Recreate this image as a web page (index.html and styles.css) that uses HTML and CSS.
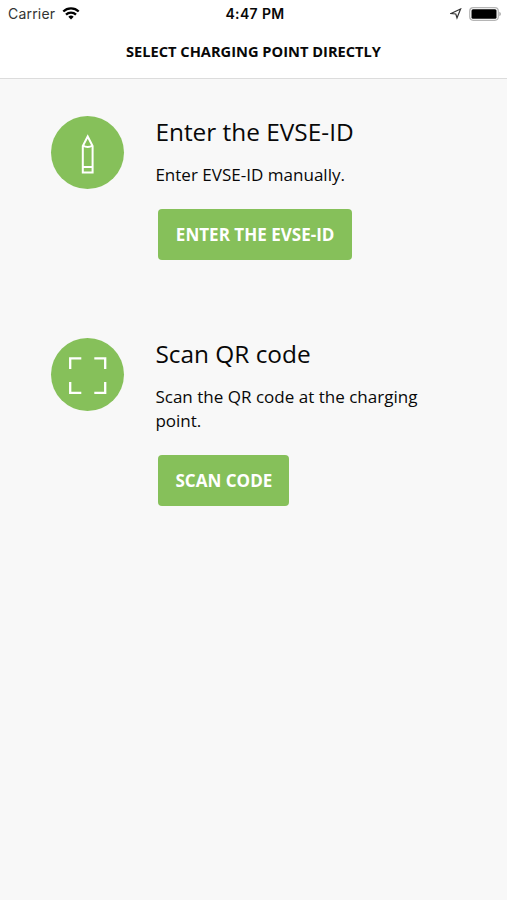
FILE: index.html
```html
<!DOCTYPE html>
<html lang="en">
<head>
  <meta charset="UTF-8" />
  <meta name="viewport" content="width=device-width, initial-scale=1" />
  <title>Select charging point directly</title>
  <link rel="stylesheet" href="styles.css">
</head>
<body>
  <header class="header">
    <div class="status-bar">
      <div class="status-left">
        <span class="carrier">Carrier</span>
        <svg class="wifi" width="18" height="14" viewBox="0 0 18 14">
          <g fill="none" stroke="#000" stroke-width="2.3">
            <path d="M1.3 4.5a11 11 0 0 1 15.4 0" />
            <path d="M4 7.6a7.1 7.1 0 0 1 10 0" />
          </g>
          <path d="M9 12.500L6.300 9.800a3.800 3.800 0 0 1 5.400 0z" />
        </svg>
      </div>
      <span class="time">4:47 PM</span>
      <div class="status-right">
        <svg class="location" width="12" height="12" viewBox="0 0 12 12">
          <path d="M1 5.500L10.600 1L7 10L5.800 6z" fill="none" stroke="#333" stroke-width="1.2" />
        </svg>
        <svg class="battery" width="33" height="14" viewBox="0 0 33 14">
          <rect x="0.7" y="0.7" width="28.6" height="12.6" rx="3.5" fill="none" stroke="#b5b5b5" stroke-width="1.2" />
          <rect x="2.5" y="2.3" width="25" height="9.4" rx="1.5" />
          <path d="M30.5 4.8a2.6 2.6 0 0 1 0 4.4z" fill="#888" />
        </svg>
      </div>
    </div>
    <h1 class="title">SELECT CHARGING POINT DIRECTLY</h1>
  </header>

  <main class="options">
    <section class="option">
      <div class="icon">
        <svg width="73" height="73" viewBox="0 0 73 73">
          <path d="M31.8 56.5V30L36.7 20.500L41.600 30V56.500zM31.800 51H41.600M31.800 29.500Q36.700 32.300 41.600 29.500" fill="none" stroke="#fff" stroke-width="2" />
        </svg>
      </div>
      <div class="details">
        <h2>Enter the EVSE-ID</h2>
        <p>Enter EVSE-ID manually.</p>
        <button class="evse">ENTER THE EVSE-ID</button>
      </div>
    </section>

    <section class="option">
      <div class="icon">
        <svg width="73" height="73" viewBox="0 0 73 73">
          <path d="M19.2 31V20.300H30.300M43.300 20.300H54.200V31M54.200 44V54.900H43.300M30.300 54.900H19.200V44" fill="none" stroke="#fff" stroke-width="2.3" />
        </svg>
      </div>
      <div class="details">
        <h2>Scan QR code</h2>
        <p>Scan the QR code at the charging point.</p>
        <button class="scan">SCAN CODE</button>
      </div>
    </section>
  </main>
</body>
</html>
```

FILE: styles.css
```css
* {
  box-sizing: border-box;
}

body {
  margin: 0;
  min-height: 100vh;
  background: #f8f8f8;
  color: #080808;
  font-family: "Open Sans", sans-serif;
}

.header {
  height: 79px;
  background: #fff;
  border-bottom: 1px solid #dcdcdc;
}

.status-bar {
  display: grid;
  grid-template-columns: 1fr auto 1fr;
  align-items: center;
  height: 27px;
  padding: 0 5px 0 8px;
  font-family: Inter, sans-serif;
  font-size: 14px;
}

.status-left,
.status-right {
  display: flex;
  align-items: center;
  gap: 7px;
}

.carrier {
  color: #333;
  letter-spacing: 0.2px;
}

.status-right {
  justify-content: flex-end;
}

.time {
  font-weight: 600;
  letter-spacing: 0.35px;
}

.title {
  margin: 0;
  font-size: 14.65px;
  line-height: 48px;
  font-weight: 700;
  text-align: center;
}

.options {
  display: flex;
  flex-direction: column;
  gap: 78px;
  padding: 36.5px 51px;
}

.option {
  display: flex;
  gap: 31px;
}

.icon {
  flex: none;
  width: 73.4px;
  height: 73.4px;
  border-radius: 50%;
  background: #86c05a;
}

.details h2 {
  margin: 0;
  font-size: 24.4px;
  line-height: 31px;
  font-weight: 400;
}

.details p {
  width: 280px;
  margin: 16px 0 21.5px;
  font-size: 17.05px;
  line-height: 24.5px;
}

.details button {
  display: block;
  height: 51px;
  margin-left: 3px;
  padding: 0;
  border: none;
  border-radius: 4px;
  background: #86c05a;
  color: #fff;
  font-family: inherit;
  font-size: 17.05px;
  font-weight: 700;
}

.details .evse {
  width: 193.5px;
}

.details .scan {
  width: 131px;
}
```
